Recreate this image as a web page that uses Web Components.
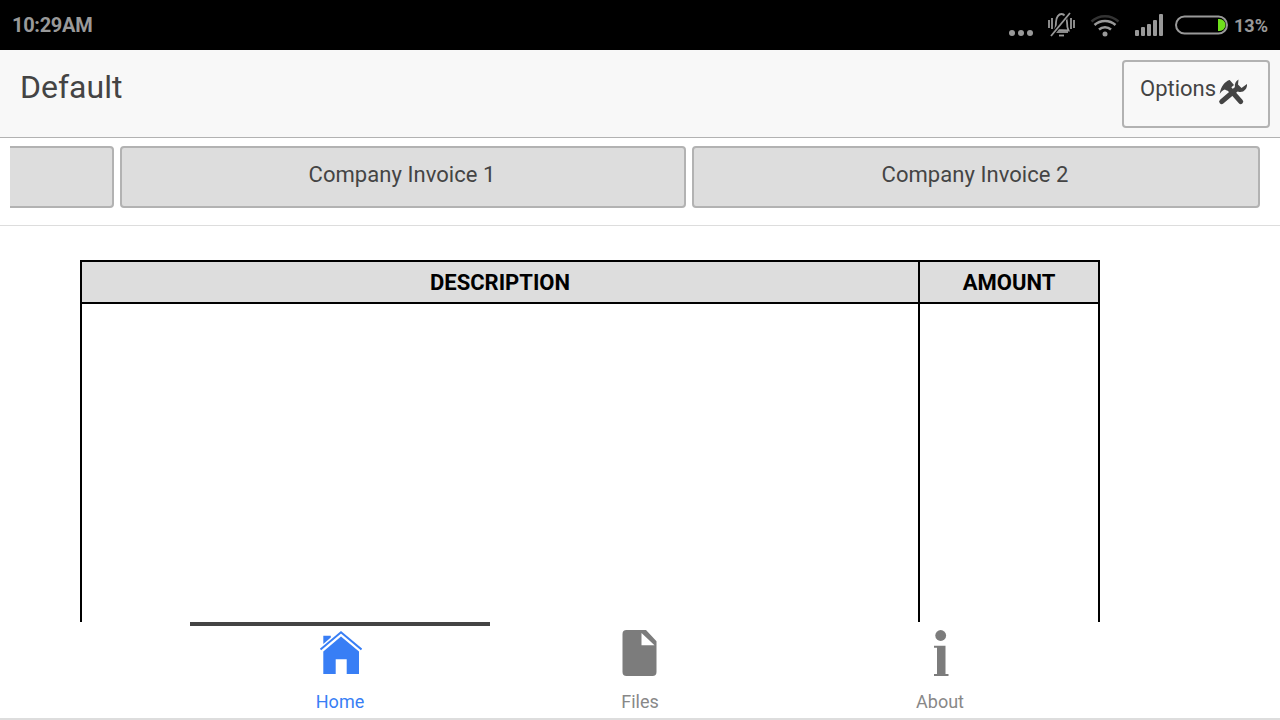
<!DOCTYPE html>
<html>
<head>
<meta charset="utf-8">
<title>Default</title>
<style>
html, body { margin: 0; height: 100%; }
body { width: 1280px; height: 720px; overflow: hidden; display: flex; flex-direction: column; font-family: Roboto, "Liberation Sans", sans-serif; background: #fff; }
</style>
</head>
<body>
<status-bar></status-bar>
<app-header title="Default"></app-header>
<tab-strip>
  <strip-tab></strip-tab>
  <strip-tab>Company Invoice 1</strip-tab>
  <strip-tab wide>Company Invoice 2</strip-tab>
</tab-strip>
<invoice-table></invoice-table>
<bottom-nav>
  <nav-item active label="Home"><svg viewBox="-2 -2 44 48" width="44" height="48"><path d="M.5 18.500 21 1.300l20.500 17.200" fill="none" stroke="#387ef5" stroke-width="2"/><path d="M3.300 11V4.700h7.500V6.500L3.300 13z" fill="#387ef5"/><path d="M21 5.500 39 20.500V43H26.700V28.300H15.700V43H3.300V20.500z" fill="#387ef5"/></svg></nav-item>
  <nav-item label="Files"><svg viewBox="0 0 44 48" width="44" height="48"><path d="M8.500 1h19.500L38.500 12.300V43a4 4 0 0 1-4 4H8.500a4 4 0 0 1-4-4V5a4 4 0 0 1 4-4z" fill="#7c7c7c"/><path d="M23.500 4v12.300h13z" fill="#fff"/></svg></nav-item>
  <nav-item label="About"><svg viewBox="0 0 44 48" width="44" height="48"><circle cx="22.700" cy="6.500" r="5.400" fill="#7c7c7c"/><path d="M16 16.700H27.500V45H30.500v2H16v-2h3V18.700h-3z" fill="#7c7c7c"/></svg></nav-item>
</bottom-nav>

<script>
class StatusBar extends HTMLElement {
    constructor() {
        super();
        this.attachShadow({ mode: "open" });
        this.shadowRoot.innerHTML = `
<style>
:host { display: flex; flex: 0 0 50px; align-items: center; justify-content: space-between; background: #000; color: #999; font-weight: 700; padding: 0 12px; box-sizing: border-box; }
.time { font-size: 20px; letter-spacing: -0.3px; }
.right { display: flex; align-items: center; }
.pct { font-size: 18px; }
svg { display: block; }
</style>
<span class="time">10:29AM</span>
<div class="right">
  <svg width="228" height="50" viewBox="1006 0 228 50" fill="none">
    <circle cx="1012" cy="33" r="3" fill="#999"/><circle cx="1021" cy="33" r="3" fill="#999"/><circle cx="1030" cy="33" r="3" fill="#999"/>
    <g stroke="#999" stroke-width="1.800">
      <path d="M1055 30c.5-1.500 1-3 1-8 0-5 3-8 5.500-8s5.500 3 5.500 8c0 5 .5 6.500 1.500 8.500z"/>
      <path d="M1056 32h12"/><path d="M1059 35.500h5"/>
      <path d="M1049 20v8M1052 18v11M1071 18v11M1074 20v8"/>
      <path d="M1069 13 1052 35" stroke="#000" stroke-width="4"/>
      <path d="M1070 13 1051 36"/>
    </g>
    <g stroke-linecap="butt">
      <path d="M1091.500 21.500a20 20 0 0 1 27 0" stroke="#333" stroke-width="2.500"/>
      <path d="M1094.500 25a15.500 15.500 0 0 1 21 0" stroke="#999" stroke-width="2.500"/>
      <path d="M1099 29.500a9 9 0 0 1 12 0" stroke="#999" stroke-width="2.500"/>
    </g>
    <circle cx="1105" cy="34" r="2.500" fill="#999"/>
    <g fill="#999">
      <rect x="1135" y="30" width="4" height="6" rx="1"/>
      <rect x="1141" y="27" width="4" height="9" rx="1"/>
      <rect x="1147" y="24" width="4" height="12" rx="1"/>
      <rect x="1153" y="20" width="4" height="16" rx="1"/>
      <rect x="1159" y="14" width="4" height="22" rx="1"/>
    </g>
    <rect x="1176" y="16.500" width="51" height="17" rx="8.500" stroke="#999" stroke-width="2"/>
    <path d="M1218 19h1.500a6 6 0 0 1 0 12H1218z" fill="#6fe01c"/>
  </svg>
  <span class="pct">13%</span>
</div>`;
    }
}
customElements.define("status-bar", StatusBar);

class AppHeader extends HTMLElement {
    constructor() {
        super();
        this.attachShadow({ mode: "open" });
        this.shadowRoot.innerHTML = `
<style>
:host { display: flex; flex: 0 0 88px; box-sizing: border-box; justify-content: space-between; align-items: flex-start; background: #f8f8f8; border-bottom: 1px solid #b2b2b2; padding: 10px 10px 0 20px; color: #444; }
h1 { margin: 0; font-size: 32px; font-weight: 400; line-height: 54px; }
button { display: flex; align-items: flex-start; box-sizing: border-box; width: 148px; height: 68px; padding: 11px 0 0 16px; background: #f8f8f8; border: 2px solid #b2b2b2; border-radius: 4px; font: 400 22px/32px Roboto, sans-serif; color: #444; }
svg { margin: 4px 0 0 2px; flex: none; }
</style>
<h1></h1>
<button>Options<svg width="30" height="30" viewBox="0 0 30 30" fill="none"><path d="M11 11.300 22.700 24.700" stroke="#444" stroke-width="5" stroke-linecap="round"/><path d="M1.700 17C2.500 10 7 4 11.700 3L16 8l-6.700 5.700-2.500-1.200C4.500 13 3 15 1.700 17z" fill="#444"/><path d="M3.700 24.700 18 12.500" stroke="#444" stroke-width="5" stroke-linecap="round"/><path d="M20.500 2.500 20 7.500 23.500 11 29 7c.5 4.500-3 8.500-7.500 8C16.500 14.500 14.500 6 20.500 2.500z" fill="#444"/></svg></button>`;
        this.shadowRoot.querySelector("h1").textContent = this.getAttribute("title");
    }
}
customElements.define("app-header", AppHeader);

class TabStrip extends HTMLElement {
    constructor() {
        super();
        this.attachShadow({ mode: "open" });
        this.shadowRoot.innerHTML = `
<style>
:host { display: block; flex: 0 0 88px; box-sizing: border-box; padding: 8px 20px 0 10px; border-bottom: 1px solid #ddd; }
.clip { overflow: hidden; }
.row { display: flex; gap: 6px; margin-left: -462px; }
</style>
<div class="clip"><div class="row"><slot></slot></div></div>`;
    }
}
customElements.define("tab-strip", TabStrip);

class StripTab extends HTMLElement {
    constructor() {
        super();
        this.attachShadow({ mode: "open" });
        this.shadowRoot.innerHTML = `
<style>
:host { display: flex; flex: 0 0 566px; box-sizing: border-box; height: 62px; padding: 11px 2px 0 0; justify-content: center; background: #ddd; border: 2px solid #b2b2b2; border-radius: 4px; color: #444; font-size: 22px; line-height: 32px; letter-spacing: 0.05px; }
:host([wide]) { flex-basis: 568px; }
</style>
<slot></slot>`;
    }
}
customElements.define("strip-tab", StripTab);

class InvoiceTable extends HTMLElement {
    constructor() {
        super();
        this.attachShadow({ mode: "open" });
        this.shadowRoot.innerHTML = `
<style>
:host { display: block; flex: 1; min-height: 0; overflow: hidden; padding: 34px 180px 0 80px; }
.grid { display: grid; grid-template-columns: 838px 1fr; grid-template-rows: 42px 1fr; box-sizing: border-box; height: 500px; border: solid #000; border-width: 2px 2px 0; }
.head { background: #ddd; color: #000; font-size: 22px; font-weight: 700; line-height: 42px; text-align: center; border-bottom: 2px solid #000; box-sizing: border-box; }
.left { border-right: 2px solid #000; }
</style>
<div class="grid">
  <div class="head left">DESCRIPTION</div>
  <div class="head">AMOUNT</div>
  <div class="left"></div>
  <div></div>
</div>`;
    }
}
customElements.define("invoice-table", InvoiceTable);

class BottomNav extends HTMLElement {
    constructor() {
        super();
        this.attachShadow({ mode: "open" });
        this.shadowRoot.innerHTML = `
<style>
:host { display: flex; flex: 0 0 98px; box-sizing: border-box; justify-content: center; background: #fff; border-bottom: 2px solid #ddd; }
</style>
<slot></slot>`;
    }
}
customElements.define("bottom-nav", BottomNav);

class NavItem extends HTMLElement {
    constructor() {
        super();
        this.attachShadow({ mode: "open" });
        this.shadowRoot.innerHTML = `
<style>
:host { display: flex; flex-direction: column; align-items: center; width: 300px; box-sizing: border-box; height: 96px; padding-top: 3px; border-top: 4px solid transparent; color: #888; font-size: 18px; }
:host([active]) { border-top-color: #444; color: #387ef5; }
.icon { height: 48px; }
.label { line-height: 24px; margin-top: 13px; }
::slotted(svg) { display: block; }
</style>
<div class="icon"><slot></slot></div>
<div class="label"></div>`;
        this.shadowRoot.querySelector(".label").textContent = this.getAttribute("label");
    }
}
customElements.define("nav-item", NavItem);
</script>
</body>
</html>
